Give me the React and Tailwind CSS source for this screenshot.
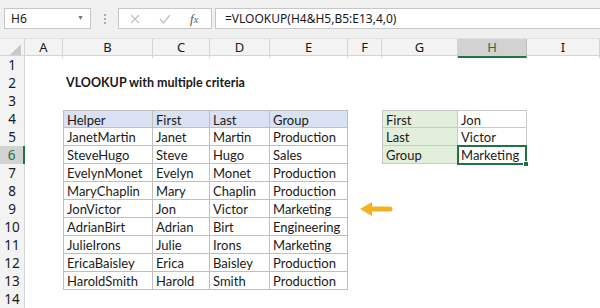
import React from 'react'

const letters = ['A', 'B', 'C', 'D', 'E', 'F', 'G', 'H', 'I']

const people = [
  ['Helper', 'First', 'Last', 'Group'],
  ['JanetMartin', 'Janet', 'Martin', 'Production'],
  ['SteveHugo', 'Steve', 'Hugo', 'Sales'],
  ['EvelynMonet', 'Evelyn', 'Monet', 'Production'],
  ['MaryChaplin', 'Mary', 'Chaplin', 'Production'],
  ['JonVictor', 'Jon', 'Victor', 'Marketing'],
  ['AdrianBirt', 'Adrian', 'Birt', 'Engineering'],
  ['JulieIrons', 'Julie', 'Irons', 'Marketing'],
  ['EricaBaisley', 'Erica', 'Baisley', 'Production'],
  ['HaroldSmith', 'Harold', 'Smith', 'Production'],
]

const lookup = [
  ['First', 'Jon'],
  ['Last', 'Victor'],
  ['Group', 'Marketing'],
]

// what goes into a cell, by row number (1-14) and column index (0=A)
const cellFor = (r, c) => {
  if (r === 2 && c === 1) {
    return <div className="pl-[3px] font-bold whitespace-nowrap text-[12.5px]">VLOOKUP with multiple criteria</div>
  }
  if (r >= 4 && r <= 13 && c >= 1 && c <= 4) {
    const isHead = r === 4
    return (
      <div
        className={
          'h-full pl-[3px] border-r border-b border-[#bfbfbf] ' +
          (c === 1 ? 'border-l ' : '') +
          (isHead ? 'border-t bg-[#d9e1f2]' : 'bg-white')
        }
      >
        {people[r - 4][c - 1]}
      </div>
    )
  }
  if (r >= 4 && r <= 6 && (c === 6 || c === 7)) {
    const val = lookup[r - 4][c - 6]
    if (c === 6) {
      return (
        <div className={'h-full pl-[3px] bg-[#e2efda] border-l border-r border-b border-[#c9c9c9] ' + (r === 4 ? 'border-t' : '')}>
          {val}
        </div>
      )
    }
    if (r === 6) {
      return (
        <div className="relative pl-[2px] border-2 border-[#217346] -mt-[1px] h-[20px] -ml-[1px] w-[70px] leading-[16px]">
          {val}
          <div className="absolute -right-[4px] -bottom-[4px] w-[6px] h-[6px] bg-[#217346] border border-white" />
        </div>
      )
    }
    return (
      <div className={'h-full pl-[3px] bg-white border-r border-b border-[#c9c9c9] ' + (r === 4 ? 'border-t' : '')}>
        {val}
      </div>
    )
  }
  return null
}

const App = () => {
  const gridCols = 'grid grid-cols-[25px_38px_90px_57px_60px_78px_34px_76px_69px_1fr]'
  const uiFont = { fontFamily: '"Noto Sans", sans-serif' }

  return (
    <div className="w-[600px] h-[308px] overflow-hidden bg-white text-[#1a1a1a]" style={{ fontFamily: 'Lato, "Noto Sans", sans-serif' }}>
      {/* formula bar */}
      <div className="h-[39px] bg-[#f0f0f0] flex items-start pt-[8px] pl-[4px] border-b border-[#e2e2e2]">
        <div className="w-[87px] h-[21px] bg-white border border-[#c6c6c6] flex items-center justify-between pl-[6px] pr-[6px] text-[12px]" style={uiFont}>
          <span>H6</span>
          <span className="text-[7px] text-[#777]">▼</span>
        </div>
        <div className="w-[27px] h-[21px] flex flex-col items-center justify-center gap-[2px]">
          <div className="w-[2px] h-[2px] bg-[#aaa]" />
          <div className="w-[2px] h-[2px] bg-[#aaa]" />
          <div className="w-[2px] h-[2px] bg-[#aaa]" />
        </div>
        <div className="w-[94px] h-[21px] bg-white border border-[#c6c6c6] flex items-center">
          <svg width="10" height="10" viewBox="0 0 10 10" className="ml-[11px]">
            <path d="M1 1 L9 9 M9 1 L1 9" stroke="#c0c0c0" strokeWidth="1.2" />
          </svg>
          <svg width="12" height="10" viewBox="0 0 12 10" className="ml-[19px]">
            <path d="M1 5 L4.5 9 L11 1" stroke="#c0c0c0" strokeWidth="1.2" fill="none" />
          </svg>
          <span className="ml-[19px] text-[13px] italic text-[#555]" style={{ fontFamily: '"Liberation Serif", serif' }}>
            f<span className="text-[10px]">x</span>
          </span>
        </div>
        <div className="flex-1 ml-[3px] h-[21px] bg-white border border-[#c6c6c6] border-r-0 flex items-center pl-[9px] text-[12px]" style={uiFont}>
          =VLOOKUP(H4&amp;H5,B5:E13,4,0)
        </div>
      </div>

      {/* column headers */}
      <div className={gridCols + ' h-[17px] bg-[#f3f3f3] border-b border-[#d4d4d4] text-[13px] leading-[17px]'} style={uiFont}>
        <div className="relative border-r border-[#d4d4d4]">
          <div className="absolute right-[3px] bottom-[3px] w-0 h-0 border-l-[11px] border-l-transparent border-b-[11px] border-b-[#c8c8c8]" />
        </div>
        {letters.map((l) =>
          l === 'H' ? (
            <div key={l} className="text-center bg-[#d2d2d2] text-[#217346] border-r border-[#c0c0c0] border-b-2 border-b-[#217346]">
              {l}
            </div>
          ) : (
            <div key={l} className="text-center border-r border-[#d4d4d4]">
              {l}
            </div>
          )
        )}
      </div>

      {/* sheet */}
      <div className="relative">
        {Array.from({ length: 14 }, (_, i) => i + 1).map((r) => (
          <div key={r} className={gridCols + ' h-[18px] text-[13px] leading-[18px]'}>
            <div
              className={
                'text-center text-[13.5px] border-b border-[#d4d4d4] ' +
                (r === 6 ? 'bg-[#d2d2d2] text-[#217346] border-r-2 border-r-[#217346]' : 'bg-[#f3f3f3] border-r border-r-[#d4d4d4]')
              }
              style={uiFont}
            >
              {r}
            </div>
            {letters.map((l, c) => (
              <div key={l} className="h-[18px] whitespace-nowrap">
                {cellFor(r, c)}
              </div>
            ))}
          </div>
        ))}

        {/* arrow */}
        <svg className="absolute left-[360px] top-[145px]" width="33" height="16" viewBox="0 0 33 16">
          <path d="M0 8 L12 1 L12 5.5 L30 5.5 Q32.5 5.5 32.5 8 Q32.5 10.5 30 10.5 L12 10.5 L12 15 Z" fill="#f2b323" />
        </svg>
      </div>
    </div>
  )
}

export default App
